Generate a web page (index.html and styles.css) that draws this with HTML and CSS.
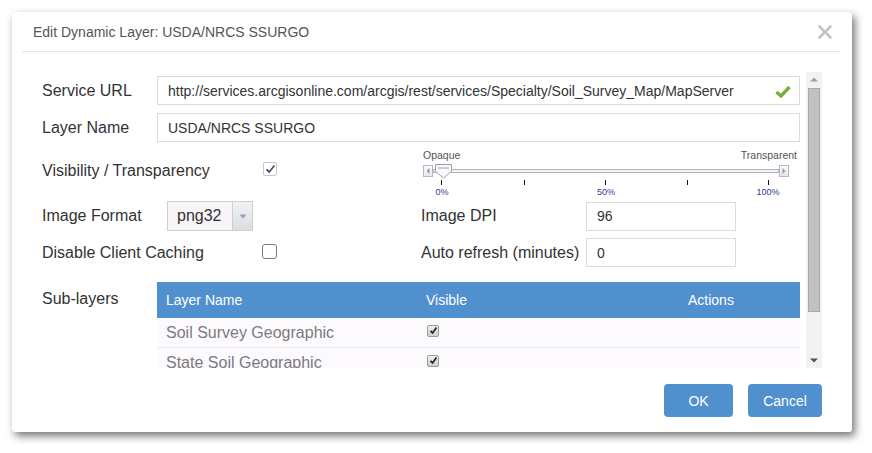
FILE: index.html
```html
<!DOCTYPE html>
<html>
<head>
<meta charset="utf-8">
<link rel="stylesheet" href="styles.css">
</head>
<body>
<div class="dialog">
  <div class="header">
    <span class="title">Edit Dynamic Layer: USDA/NRCS SSURGO</span>
    <svg class="close" width="14" height="14" viewBox="0 0 14 14"><path d="M1.5 1.5L12.5 12.5M12.5 1.5L1.5 12.5" stroke="#c2c2ca" stroke-width="2.6" stroke-linecap="round"/></svg>
  </div>
  <div class="body">
    <div class="content">
      <div class="row r1">
        <div class="label lw">Service URL</div>
        <div class="input url">http://services.arcgisonline.com/arcgis/rest/services/Specialty/Soil_Survey_Map/MapServer
          <svg class="ok" width="16" height="13" viewBox="0 0 16 13"><path d="M1.5 7L6 11L14.5 2" fill="none" stroke="#77ae3f" stroke-width="3.4" stroke-linejoin="miter"/></svg>
        </div>
      </div>
      <div class="row r2">
        <div class="label lw">Layer Name</div>
        <div class="input url">USDA/NRCS SSURGO</div>
      </div>
      <div class="row r3">
        <div class="half">
          <div class="label lv">Visibility / Transparency</div>
          <span class="cb checked"><svg width="11" height="10" viewBox="0 0 11 10"><path d="M1.5 5.5L4.2 8L9.5 1.5" fill="none" stroke="#4a4f6e" stroke-width="1.8"/></svg></span>
        </div>
        <div class="slider">
          <div class="slabels"><span>Opaque</span><span>Transparent</span></div>
          <div class="strack">
            <span class="sbtn"><svg width="8" height="10" viewBox="0 0 8 10"><path d="M5.5 2L2.5 5L5.5 8Z" fill="#8a9ab0"/></svg></span>
            <span class="rail"><span class="handle"><svg width="17" height="15" viewBox="0 0 17 15"><path d="M0.5 0.5H16.5V7.5L8.5 14L0.5 7.5Z" fill="#fbfbfb" stroke="#9aa0a8"/><path d="M3 4H14" stroke="#9aa0a8"/></svg></span></span>
            <span class="sbtn"><svg width="8" height="10" viewBox="0 0 8 10"><path d="M2.5 2L5.5 5L2.5 8Z" fill="#8a9ab0"/></svg></span>
          </div>
          <div class="ticks"><i></i><i></i><i></i><i></i><i></i></div>
          <div class="tlabels"><span>0%</span><span>50%</span><span>100%</span></div>
        </div>
      </div>
      <div class="row r4">
        <div class="half">
          <div class="label lf">Image Format</div>
          <div class="select"><span class="sv">png32</span><span class="sarrow"><svg width="8" height="5" viewBox="0 0 8 5"><path d="M0.5 0.5H7.5L4 4.5Z" fill="#8f9fbf"/></svg></span></div>
        </div>
        <div class="label lr">Image DPI</div>
        <div class="input small">96</div>
      </div>
      <div class="row r5">
        <div class="half">
          <div class="label lc">Disable Client Caching</div>
          <span class="cb empty"></span>
        </div>
        <div class="label lr">Auto refresh (minutes)</div>
        <div class="input small">0</div>
      </div>
      <div class="row r6">
        <div class="label lw sub">Sub-layers</div>
        <div class="table">
          <div class="thead"><span class="c1">Layer Name</span><span class="c2">Visible</span><span class="c3">Actions</span></div>
          <div class="trow"><span class="c1">Soil Survey Geographic</span><span class="c2"><span class="tcb"><svg width="9" height="9" viewBox="0 0 9 9"><path d="M1.5 4.8L3.6 7L7.5 1.5" fill="none" stroke="#222" stroke-width="1.7"/></svg></span></span></div>
          <div class="trow"><span class="c1">State Soil Geographic</span><span class="c2"><span class="tcb"><svg width="9" height="9" viewBox="0 0 9 9"><path d="M1.5 4.8L3.6 7L7.5 1.5" fill="none" stroke="#222" stroke-width="1.7"/></svg></span></span></div>
        </div>
      </div>
    </div>
    <div class="scrollbar">
      <svg class="arr" width="8" height="5" viewBox="0 0 8 5"><path d="M0 4.5H8L4 0.5Z" fill="#a0a0a0"/></svg>
      <div class="thumb"></div>
      <div class="spacer"></div>
      <svg class="arr" width="8" height="5" viewBox="0 0 8 5"><path d="M0 0.5H8L4 4.5Z" fill="#505050"/></svg>
    </div>
  </div>
  <div class="footer">
    <button class="btn ok-btn">OK</button>
    <button class="btn cancel-btn">Cancel</button>
  </div>
</div>
</body>
</html>
```

FILE: styles.css
```css
html, body {
  margin: 0;
  padding: 0;
  background: #ffffff;
}
body {
  font-family: "Liberation Sans", Arial, sans-serif;
  color: #333;
}
.dialog {
  position: relative;
  margin: 12px;
  width: 840px;
  height: 420px;
  background: #fff;
  border-radius: 3px;
  box-shadow: 3px 4px 9px rgba(0,0,0,0.55);
  display: flex;
  flex-direction: column;
  overflow: hidden;
}
.header {
  height: 39px;
  margin: 0 12px 0 10px;
  padding-left: 11px;
  border-bottom: 1px solid #e6e6ea;
  display: flex;
  align-items: center;
  justify-content: space-between;
  flex-shrink: 0;
}
.title {
  font-size: 14px;
  color: #555;
  margin-top: 1px;
}
.close {
  margin-right: 8px;
  margin-top: 0px;
}
.body {
  margin: 20px 30px 0 10px;
  height: 296px;
  display: flex;
  flex-shrink: 0;
}
.content {
  flex: 1;
  overflow: hidden;
  padding-left: 20px;
  padding-right: 6px;
}
.row {
  display: flex;
  align-items: center;
}
.label {
  font-size: 16px;
  color: #333;
  flex-shrink: 0;
}
.lw { width: 115px; }
.lv { width: 221px; }
.lf { width: 125px; }
.lc { width: 220px; }
.lr { width: 165px; }
.half {
  width: 379px;
  display: flex;
  align-items: center;
  flex-shrink: 0;
}
.input {
  box-sizing: border-box;
  height: 29px;
  border: 1px solid #dcdcdc;
  font-size: 14px;
  color: #333;
  display: flex;
  align-items: center;
  padding-left: 10px;
  position: relative;
}
.url { width: 643px; }
.ok {
  position: absolute;
  right: 8px;
  top: 8px;
}
.r1 { margin-top: 4px; height: 29px; }
.r2 { margin-top: 8px; height: 29px; }
.r3 { margin-top: 4px; height: 50px; }
.r4 { margin-top: 5px; height: 30px; align-items: center; }
.r5 { margin-top: 7px; height: 29px; }
.r6 { margin-top: 15px; align-items: flex-start; }
.cb {
  box-sizing: border-box;
  display: inline-flex;
  align-items: center;
  justify-content: center;
}
.cb.checked {
  width: 14px;
  height: 14px;
  border: 1px solid #c8c8d0;
  border-radius: 2px;
  margin-top: -5px;
}
.cb.empty {
  width: 15px;
  height: 15px;
  border: 1px solid #7a7a7a;
  border-radius: 3px;
  margin-top: -3px;
}
.slider {
  width: 379px;
  height: 50px;
  padding-left: 2px;
  box-sizing: border-box;
  margin-top: 6px;
}
.slabels {
  display: flex;
  justify-content: space-between;
  font-size: 10.5px;
  color: #555;
  padding-right: 3px;
  height: 12px;
  line-height: 12px;
}
.strack {
  display: flex;
  align-items: center;
  height: 16px;
  width: 366px;
  margin-top: 2px;
}
.sbtn {
  box-sizing: border-box;
  width: 10px;
  height: 12px;
  border: 1px solid #b4b8c0;
  background: linear-gradient(#fafafa, #e6e8ec);
  display: inline-flex;
  align-items: center;
  justify-content: center;
  flex-shrink: 0;
}
.rail {
  flex: 1;
  height: 4px;
  box-sizing: border-box;
  border: 1px solid #b0b4bc;
  background: #f4f4f6;
  position: relative;
}
.handle {
  position: absolute;
  left: 1px;
  top: -6px;
  line-height: 0;
}
.ticks {
  position: relative;
  height: 7px;
  width: 370px;
}
.ticks i {
  position: absolute;
  top: 1px;
  width: 1px;
  height: 5px;
  background: #111;
}
.ticks i:nth-child(1) { left: 18px; }
.ticks i:nth-child(2) { left: 101px; }
.ticks i:nth-child(3) { left: 182px; }
.ticks i:nth-child(4) { left: 264px; }
.ticks i:nth-child(5) { left: 345px; }
.tlabels {
  position: relative;
  height: 12px;
  font-size: 9px;
  color: #2b3a9a;
}
.tlabels span {
  position: absolute;
  top: 1px;
  transform: translateX(-50%);
}
.tlabels span:nth-child(1) { left: 19px; }
.tlabels span:nth-child(2) { left: 183px; }
.tlabels span:nth-child(3) { left: 345px; }
.select {
  box-sizing: border-box;
  width: 86px;
  height: 30px;
  border: 1px solid #cfcfd6;
  background: #f8f4f8;
  display: flex;
  align-items: stretch;
}
.sv {
  flex: 1;
  font-size: 16px;
  color: #333;
  display: flex;
  align-items: center;
  padding-left: 9px;
}
.sarrow {
  width: 19px;
  border-left: 1px solid #cfcfd6;
  background: linear-gradient(#f2f2f4, #dcdde2);
  display: flex;
  align-items: center;
  justify-content: center;
}
.small {
  width: 150px;
  padding-left: 10px;
}
.sub {
  margin-top: 8px;
}
.table {
  width: 643px;
}
.thead {
  height: 36px;
  background: #5190cf;
  color: #fff;
  font-size: 14px;
  display: flex;
  align-items: center;
}
.trow {
  height: 29px;
  background: #fdfafd;
  border-bottom: 1px solid #ececf0;
  display: flex;
  align-items: center;
  font-size: 16px;
  color: #7a7a80;
}
.c1 { width: 260px; padding-left: 9px; }
.c2 { width: 262px; display: flex; }
.c3 { flex: 1; }
.tcb {
  box-sizing: border-box;
  width: 12px;
  height: 12px;
  border: 1px solid #9a9a9a;
  border-radius: 2px;
  background: linear-gradient(#f0f0f0, #d0d0d0);
  display: inline-flex;
  align-items: center;
  justify-content: center;
  margin-left: 1px;
  margin-top: -4px;
}
.scrollbar {
  width: 16px;
  background: #f3f1f3;
  display: flex;
  flex-direction: column;
  align-items: center;
  flex-shrink: 0;
  padding: 5px 0 5px;
  box-sizing: border-box;
}
.arr { flex-shrink: 0; }
.thumb {
  margin-top: 6px;
  width: 12px;
  height: 224px;
  box-sizing: border-box;
  background: #c1c1c1;
  border: 1px solid #a8a8a8;
}
.spacer { flex: 1; }
.footer {
  display: flex;
  justify-content: flex-end;
  gap: 15px;
  padding: 16px 30px 15px 0;
}
.btn {
  height: 33px;
  border: none;
  border-radius: 4px;
  background: #5190cf;
  color: #fff;
  font-family: "Liberation Sans", Arial, sans-serif;
  font-size: 14px;
  padding: 0;
}
.ok-btn { width: 69px; }
.cancel-btn { width: 74px; }
```
